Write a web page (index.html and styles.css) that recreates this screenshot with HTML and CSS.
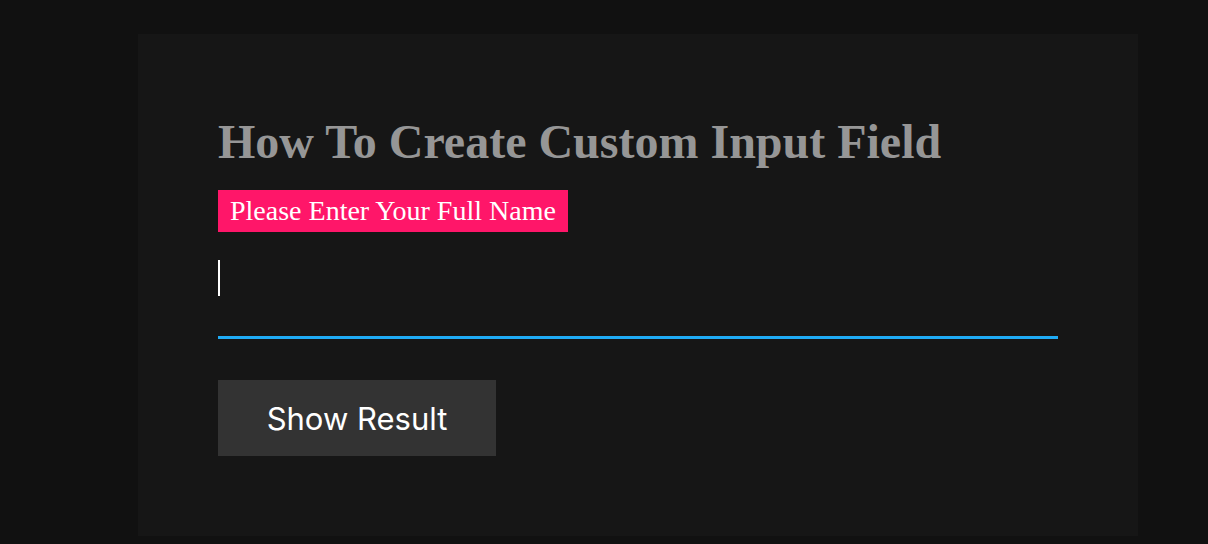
FILE: index.html
```html
<!DOCTYPE html>
<html>
<head>
<meta charset="utf-8">
<link rel="stylesheet" href="styles.css">
</head>
<body>
<div class="page">
  <div class="panel">
    <h1 class="title">How To Create Custom Input Field</h1>
    <label class="label" for="name">Please Enter Your Full Name</label>
    <div class="field">
      <input id="name" class="input" type="text">
      <span class="caret"></span>
    </div>
    <button class="btn">Show Result</button>
  </div>
</div>
</body>
</html>
```
FILE: styles.css
```css
* { box-sizing: border-box; }
html, body { margin: 0; padding: 0; }
body {
  background: #111111;
  width: 1208px;
  height: 544px;
  overflow: hidden;
}
.page {
  padding-top: 34px;
  padding-left: 138px;
  display: flex;
}
.panel {
  width: 1000px;
  height: 502px;
  background: #161616;
  padding: 80px 80px;
  display: flex;
  flex-direction: column;
  align-items: flex-start;
}
.title {
  margin: 0;
  font-family: "Liberation Serif", "Times New Roman", serif;
  font-weight: bold;
  font-size: 48px;
  line-height: 56px;
  color: #969696;
}
.label {
  margin-top: 20px;
  background: #ff1669;
  color: #ffffff;
  font-family: "Liberation Serif", "Times New Roman", serif;
  font-size: 28px;
  line-height: 42px;
  height: 42px;
  padding: 0 12px;
}
.field {
  position: relative;
  width: 840px;
  margin-top: 10px;
}
.input {
  display: block;
  width: 840px;
  height: 97px;
  background: transparent;
  border: none;
  border-bottom: 3px solid #1fabf5;
  outline: none;
  color: #fff;
  font-size: 32px;
  padding: 0;
}
.caret {
  position: absolute;
  left: 0;
  top: 18px;
  width: 2px;
  height: 36px;
  background: #ffffff;
}
.btn {
  margin-top: 41px;
  width: 278px;
  height: 76px;
  background: #333333;
  border: none;
  color: #ffffff;
  font-family: Inter, "Open Sans", sans-serif;
  font-size: 31px;
  padding: 0;
}
```
